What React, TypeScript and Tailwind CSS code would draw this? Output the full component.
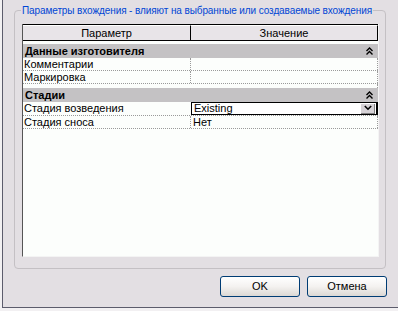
import React from 'react';

const font = { fontFamily: '"Liberation Sans", Arial, sans-serif' };

const DoubleUp = () => (
  <svg width="7" height="8" viewBox="0 0 7 8" fill="none" stroke="#000" strokeWidth="1.4">
    <path d="M0.5 4 L3.5 1 L6.5 4" />
    <path d="M0.5 7.5 L3.5 4.5 L6.5 7.5" />
  </svg>
);

const Category = ({ title }: { title: string }) => (
  <div className="flex h-[14px] items-center justify-between bg-[#c4c2c4] pl-[2px] pr-[5px]">
    <span className="text-[11px] font-bold leading-none text-black">{title}</span>
    <DoubleUp />
  </div>
);

const Row = ({ name, value }: { name: string; value?: string }) => (
  <div className="flex h-[13px] border-b border-dotted border-[#9a9a9a]">
    <div className="flex w-[168px] items-center border-r border-dotted border-[#9a9a9a] pl-[1px] text-[11px] leading-none text-black">
      {name}
    </div>
    <div className="flex flex-1 items-center border-r border-dotted border-[#9a9a9a] pl-[2px] text-[11px] leading-none text-black">
      {value}
    </div>
  </div>
);

const ComboRow = ({ name, value }: { name: string; value: string }) => (
  <div className="flex h-[14px] border-b border-dotted border-[#9a9a9a]">
    <div className="flex w-[168px] items-center pl-[1px] text-[11px] leading-none text-black">{name}</div>
    <div className="flex flex-1 items-center border border-r-2 border-black bg-white pl-[2px] pr-[1px]">
      <span className="flex-1 text-[11px] leading-none text-black">{value}</span>
      <span className="flex h-[10px] w-[14px] items-center justify-center border-b border-r border-[#808080] bg-[#d6d2d6]">
        <svg width="8" height="6" viewBox="0 0 8 6" fill="none" stroke="#000" strokeWidth="1.6">
          <path d="M0.8 1 L4 4.2 L7.2 1" />
        </svg>
      </span>
    </div>
  </div>
);

const XpButton = ({ label }: { label: string }) => (
  <button className="flex h-[21px] w-[80px] items-center justify-center rounded-[3px] border border-[#003c74] bg-gradient-to-b from-white via-[#f4f2f0] to-[#dcd8d4] text-[11px] leading-none text-black">
    {label}
  </button>
);

export default function App() {
  return (
    <div className="h-[311px] w-[398px] bg-[#f2f0f2] pl-[2px] pb-[3px]" style={font}>
      <div className="flex h-full flex-col border-b border-l border-[#5c5c6c] bg-[#e3dfe3] pl-[11px] pt-[10px]">
        {/* Групповая рамка */}
        <div className="relative h-[259px] w-[372px] rounded-[4px] border border-[#c4c0c4] pl-[7px] pt-[13px]">
          <span className="absolute left-[6px] top-[-7px] whitespace-nowrap bg-[#e3dfe3] px-[1px] text-[10px] leading-[13px] tracking-[-0.1px] text-[#0046d5]">
            Параметры вхождения - влияют на выбранные или создаваемые вхождения
          </span>
          <div className="flex h-[233px] w-[357px] flex-col border-b border-l border-r border-l-[#555] border-b-[#f4f4f4] border-r-[#f4f4f4] bg-[#fcfefc]">
            {/* Заголовок таблицы */}
            <div className="flex h-[17px] border-b border-t border-black bg-[#e8e4e8] text-[11px] leading-none text-black">
              <div className="flex w-[168px] items-center justify-center border-r border-black border-t border-t-white">Параметр</div>
              <div className="flex flex-1 items-center justify-center border-r border-black border-t border-t-white">Значение</div>
            </div>
            <div className="h-[3px]" />
            <Category title="Данные изготовителя" />
            <Row name="Комментарии" />
            <Row name="Маркировка" />
            <div className="h-[4px] border-r border-dotted border-[#9a9a9a]" />
            <Category title="Стадии" />
            <ComboRow name="Стадия возведения" value="Existing" />
            <Row name="Стадия сноса" value="Нет" />
          </div>
        </div>
        {/* Кнопки */}
        <div className="mt-[7px] flex w-[373px] justify-end gap-[7px]">
          <XpButton label="OK" />
          <XpButton label="Отмена" />
        </div>
      </div>
    </div>
  );
}
